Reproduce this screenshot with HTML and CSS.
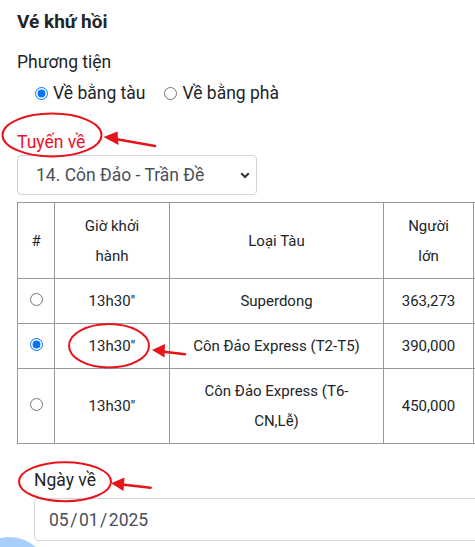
FILE: index.html
```html
<!DOCTYPE html>
<html lang="vi">
<head>
<meta charset="utf-8">
<title>Vé khứ hồi</title>
<link rel="stylesheet" href="styles.css">
</head>
<body>
<div class="page">
  <h3 class="title">Vé khứ hồi</h3>
  <div class="label">Phương tiện</div>
  <div class="radios">
    <label class="opt"><input type="radio" name="pt" checked> Về bằng tàu</label>
    <label class="opt"><input type="radio" name="pt"> Về bằng phà</label>
  </div>
  <div class="label red">Tuyến về</div>
  <div class="select">
    <span>14. Côn Đảo - Trần Đề</span>
    <svg class="chev" width="10" height="7" viewBox="0 0 10 7"><path d="M1.2 1.2L5 5L8.8 1.2" fill="none" stroke="#333" stroke-width="2"/></svg>
  </div>
  <table class="grid">
    <thead>
      <tr>
        <th class="c1">#</th>
        <th class="c2">Giờ khởi<br>hành</th>
        <th class="c3">Loại Tàu</th>
        <th class="c4">Người<br>lớn</th>
        <th class="c5"></th>
      </tr>
    </thead>
    <tbody>
      <tr>
        <td><input type="radio" name="tau"></td>
        <td>13h30"</td>
        <td>Superdong</td>
        <td>363,273</td>
        <td></td>
      </tr>
      <tr>
        <td><input type="radio" name="tau" checked></td>
        <td>13h30"</td>
        <td>Côn Đảo Express (T2-T5)</td>
        <td>390,000</td>
        <td></td>
      </tr>
      <tr>
        <td><input type="radio" name="tau"></td>
        <td>13h30"</td>
        <td>Côn Đảo Express (T6-<br>CN,Lễ)</td>
        <td>450,000</td>
        <td></td>
      </tr>
    </tbody>
  </table>
  <div class="date-group">
    <div class="label">Ngày về</div>
    <div class="date-input">05<span class="sl">/</span>01<span class="sl">/</span>2025</div>
  </div>
</div>
<svg class="annot" width="475" height="547" viewBox="0 0 475 547">
  <g fill="none" stroke="#e6141b" stroke-width="2">
    <ellipse cx="52" cy="135" rx="49.5" ry="21.5"/>
    <ellipse cx="109" cy="345.8" rx="40" ry="21.8"/>
    <ellipse cx="65" cy="481.7" rx="46" ry="19.5"/>
  </g>
  <g stroke="#e6141b" stroke-width="2.5" stroke-linecap="round">
    <line x1="155" y1="146" x2="114" y2="138.8"/>
    <line x1="185" y1="354.3" x2="162" y2="351.4"/>
    <line x1="150.7" y1="487.7" x2="122" y2="484.6"/>
  </g>
  <g fill="#e6141b">
    <polygon points="103.5,137 117.5,131.5 118.5,145"/>
    <polygon points="152,350 165,344 164.5,357.5"/>
    <polygon points="111,483.3 124.5,477.5 123.5,491"/>
  </g>
</svg>
<div class="fab"></div>
</body>
</html>
```
FILE: styles.css
```css
html, body {
  margin: 0;
  padding: 0;
  overflow: hidden;
  background: #fff;
}
body {
  font-family: Roboto, "Liberation Sans", Arial, sans-serif;
  color: #212529;
  width: 475px;
  height: 547px;
  position: relative;
}
.page {
  padding: 0 17px;
}
.title {
  margin: 11px 0 0;
  font-size: 19px;
  line-height: 22px;
  font-weight: 700;
}
.label {
  font-size: 17.5px;
  line-height: 24px;
  margin-top: 17px;
}
.red {
  color: #f0102a;
  margin-top: 25px;
}
.radios {
  display: flex;
  align-items: center;
  gap: 19px;
  padding-left: 18px;
  margin-top: 7px;
  font-size: 17.5px;
  line-height: 24px;
}
.opt {
  display: flex;
  align-items: center;
  gap: 5px;
}
input[type="radio"] {
  width: 13px;
  height: 13px;
  margin: 0;
}
.select {
  margin-top: 1px;
  width: 240px;
  height: 40px;
  box-sizing: border-box;
  border: 1px solid #ced4da;
  border-radius: 4px;
  display: flex;
  align-items: center;
  justify-content: space-between;
  padding: 0 6px 0 18px;
  font-size: 17.5px;
  color: #495057;
}
.chev {
  display: block;
}
.grid {
  margin-top: 7px;
  border-collapse: collapse;
  table-layout: fixed;
  width: 547px;
  font-size: 15px;
  line-height: 30px;
}
.grid th,
.grid td {
  border: 1px solid #999;
  text-align: center;
  vertical-align: middle;
  font-weight: 400;
  padding: 7px 4px;
}
.grid th {
  padding: 7.5px 4px;
}
.grid td input {
  vertical-align: middle;
  margin: 0 0 6px;
}
.c1 { width: 28px; }
.c2 { width: 106px; }
.c3 { width: 205px; }
.c4 { width: 81px; }
.c5 { width: 82px; }
.date-group {
  padding-left: 17px;
  margin-top: 24px;
}
.date-group .label {
  margin-top: 0;
}
.date-input {
  margin-top: 6px;
  width: 460px;
  height: 43px;
  box-sizing: border-box;
  border: 1px solid #ced4da;
  border-radius: 4px;
  display: flex;
  align-items: center;
  padding-left: 14px;
  font-size: 17.5px;
  color: #495057;
}
.sl {
  padding: 0 1.5px;
}
.annot {
  position: absolute;
  left: 0;
  top: 0;
  pointer-events: none;
}
.fab {
  position: absolute;
  left: -28px;
  top: 537px;
  width: 76px;
  height: 76px;
  border-radius: 50%;
  background: #a8cffa;
}
```
